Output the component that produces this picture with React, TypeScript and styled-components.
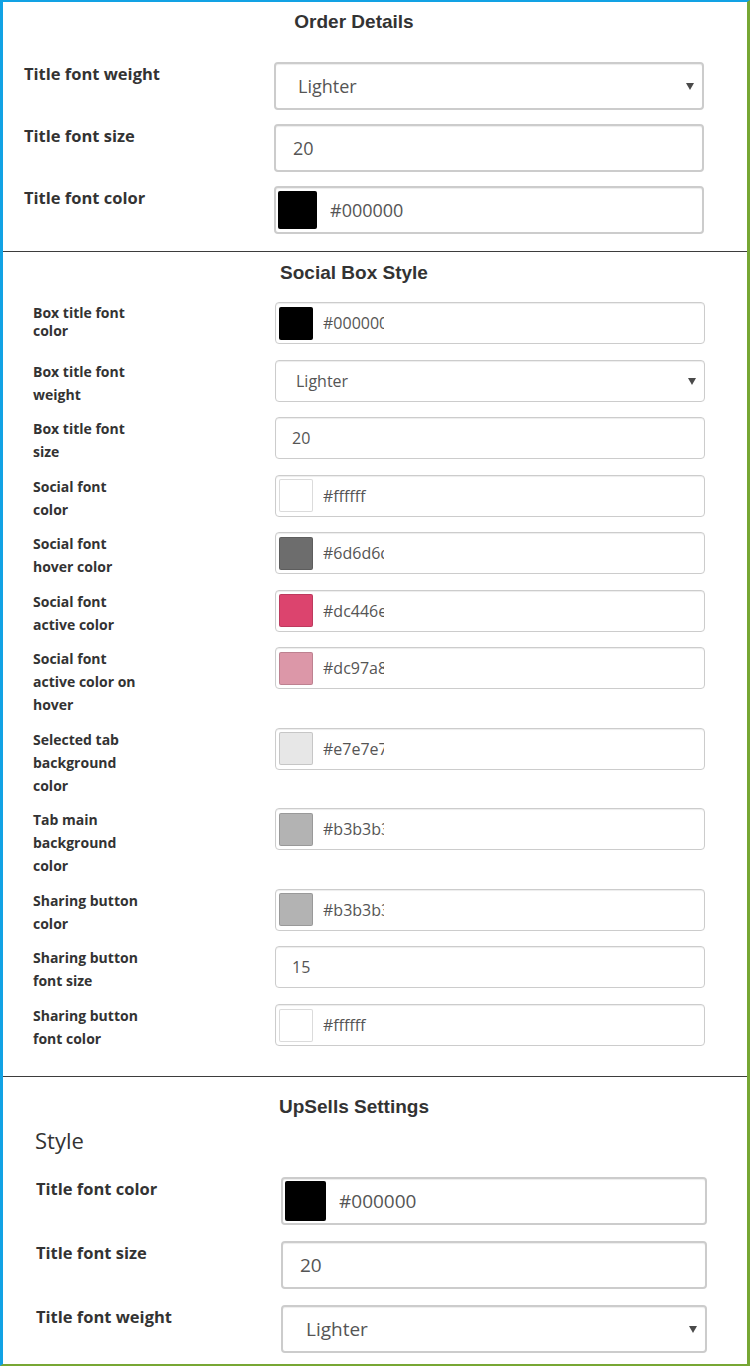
import React from 'react';
import styled, { createGlobalStyle, css } from 'styled-components';

const GlobalStyle = createGlobalStyle`
  html, body {
    margin: 0;
    padding: 0;
    background: #ffffff;
  }
  * {
    box-sizing: border-box;
  }
`;

type Size = 'lg' | 'sm';

const Frame = styled.div`
  width: 750px;
  height: 1366px;
  overflow: hidden;
  background: #ffffff;
  border-top: 2px solid #12a2e4;
  border-left: 3px solid #12a2e4;
  border-right: 3px solid #77a734;
  border-bottom: 2px solid #77a734;
  font-family: 'Open Sans', 'Noto Sans', sans-serif;
  color: #333333;
`;

const Section = styled.section<{ $top: number; $bottom: number; $divider?: boolean }>`
  padding-top: ${(p) => p.$top}px;
  padding-bottom: ${(p) => p.$bottom}px;
  ${(p) =>
    p.$divider &&
    css`
      border-bottom: 1px solid #3d3d3d;
    `}
`;

const Heading = styled.h3<{ $after: number }>`
  margin: 0 0 ${(p) => p.$after}px;
  padding-right: 42px;
  text-align: center;
  font-family: 'Liberation Sans', Arial, sans-serif;
  font-size: 19px;
  line-height: 22px;
  font-weight: 700;
  color: #333333;
`;

const SubHeading = styled.h4`
  margin: 0 0 22px;
  padding-left: 32px;
  font-size: 22px;
  line-height: 30px;
  font-weight: 400;
  color: #333333;
`;

const Rows = styled.div<{ $gap: number }>`
  display: flex;
  flex-direction: column;
  gap: ${(p) => p.$gap}px;
`;

const Row = styled.div<{ $left: number; $labelWidth: number; $fieldWidth: number }>`
  display: grid;
  grid-template-columns: ${(p) => p.$labelWidth}px ${(p) => p.$fieldWidth}px;
  align-items: start;
  padding-left: ${(p) => p.$left}px;
`;

const Label = styled.div<{ $size: Size; $tight?: boolean }>`
  font-weight: 700;
  color: #333333;
  white-space: nowrap;
  ${(p) =>
    p.$size === 'lg'
      ? css`
          font-size: 16.5px;
          line-height: 22px;
          padding-top: 1px;
        `
      : css`
          font-size: 14px;
          line-height: ${p.$tight ? 18 : 23}px;
          padding-top: ${p.$tight ? 2 : 0}px;
          min-height: 46px;
        `}
`;

const fieldBox = css<{ $size: Size }>`
  width: 100%;
  height: ${(p) => (p.$size === 'lg' ? 48 : 42)}px;
  border: ${(p) => (p.$size === 'lg' ? 2 : 1)}px solid #cccccc;
  border-radius: 4px;
  background: #ffffff;
  box-shadow: inset 0 1px 1px rgba(0, 0, 0, 0.075);
  color: #555555;
  font-family: 'Open Sans', 'Noto Sans', sans-serif;
`;

const TextInput = styled.input<{ $size: Size; $pad: number; $font: number }>`
  ${fieldBox};
  display: block;
  padding: 0 0 0 ${(p) => p.$pad}px;
  font-size: ${(p) => p.$font}px;
  outline: none;
`;

const SelectWrap = styled.div`
  position: relative;
  width: 100%;
`;

const Select = styled.select<{ $size: Size; $pad: number; $font: number }>`
  ${fieldBox};
  display: block;
  appearance: none;
  -webkit-appearance: none;
  padding: 0 0 0 ${(p) => p.$pad}px;
  font-size: ${(p) => p.$font}px;
  outline: none;
`;

const Caret = styled.span<{ $size: Size }>`
  position: absolute;
  right: ${(p) => (p.$size === 'lg' ? 10 : 9)}px;
  top: 50%;
  margin-top: -3px;
  width: 0;
  height: 0;
  border-left: 4.5px solid transparent;
  border-right: 4.5px solid transparent;
  border-top: 7px solid #4a4a4a;
  pointer-events: none;
`;

const ColorBox = styled.div<{ $size: Size }>`
  ${fieldBox};
  display: flex;
  align-items: center;
  padding: 0 0 0 ${(p) => (p.$size === 'lg' ? 2 : 3)}px;
  gap: ${(p) => (p.$size === 'lg' ? 13 : 10)}px;
`;

const Swatch = styled.span<{ $dim: number }>`
  flex: none;
  width: ${(p) => p.$dim + 1}px;
  height: ${(p) => p.$dim}px;
  border: 1px solid rgba(0, 0, 0, 0.14);
  border-radius: 2px;
`;

const HexText = styled.span<{ $font: number; $clip?: number }>`
  flex: none;
  font-size: ${(p) => p.$font}px;
  color: #555555;
  white-space: nowrap;
  overflow: hidden;
  ${(p) =>
    p.$clip &&
    css`
      width: ${p.$clip}px;
    `}
`;

type Field =
  | { kind: 'select'; value: string }
  | { kind: 'text'; value: string }
  | { kind: 'color'; value: string };

type Item = { label: string[]; field: Field; tight?: boolean };

type Layout = {
  size: Size;
  left: number;
  labelWidth: number;
  fieldWidth: number;
  gap: number;
  selectPad: number;
  textPad: number;
  font: number;
  swatch: number;
  clip?: number;
};

const orderItems: Item[] = [
  { label: ['Title font weight'], field: { kind: 'select', value: 'Lighter' } },
  { label: ['Title font size'], field: { kind: 'text', value: '20' } },
  { label: ['Title font color'], field: { kind: 'color', value: '#000000' } },
];

const socialItems: Item[] = [
  { label: ['Box title font', 'color'], field: { kind: 'color', value: '#000000' }, tight: true },
  { label: ['Box title font', 'weight'], field: { kind: 'select', value: 'Lighter' } },
  { label: ['Box title font', 'size'], field: { kind: 'text', value: '20' } },
  { label: ['Social font', 'color'], field: { kind: 'color', value: '#ffffff' } },
  { label: ['Social font', 'hover color'], field: { kind: 'color', value: '#6d6d6d' } },
  { label: ['Social font', 'active color'], field: { kind: 'color', value: '#dc446e' } },
  { label: ['Social font', 'active color on', 'hover'], field: { kind: 'color', value: '#dc97a8' } },
  { label: ['Selected tab', 'background', 'color'], field: { kind: 'color', value: '#e7e7e7' } },
  { label: ['Tab main', 'background', 'color'], field: { kind: 'color', value: '#b3b3b3' } },
  { label: ['Sharing button', 'color'], field: { kind: 'color', value: '#b3b3b3' } },
  { label: ['Sharing button', 'font size'], field: { kind: 'text', value: '15' } },
  { label: ['Sharing button', 'font color'], field: { kind: 'color', value: '#ffffff' } },
];

const upsellItems: Item[] = [
  { label: ['Title font color'], field: { kind: 'color', value: '#000000' } },
  { label: ['Title font size'], field: { kind: 'text', value: '20' } },
  { label: ['Title font weight'], field: { kind: 'select', value: 'Lighter' } },
];

const orderLayout: Layout = {
  size: 'lg', left: 21, labelWidth: 250, fieldWidth: 430, gap: 14,
  selectPad: 22, textPad: 17, font: 18, swatch: 38,
};

const socialLayout: Layout = {
  size: 'sm', left: 30, labelWidth: 242, fieldWidth: 430, gap: 11.55,
  selectPad: 20, textPad: 16, font: 16, swatch: 33, clip: 61,
};

const upsellLayout: Layout = {
  size: 'lg', left: 33, labelWidth: 245, fieldWidth: 426, gap: 16,
  selectPad: 23, textPad: 17, font: 19, swatch: 40,
};

const FieldControl: React.FC<{ field: Field; layout: Layout }> = ({ field, layout }) => {
  if (field.kind === 'select') {
    return (
      <SelectWrap>
        <Select $size={layout.size} $pad={layout.selectPad} $font={layout.font} defaultValue={field.value}>
          <option>Lighter</option>
          <option>Normal</option>
          <option>Bold</option>
          <option>Bolder</option>
        </Select>
        <Caret $size={layout.size} />
      </SelectWrap>
    );
  }
  if (field.kind === 'text') {
    return (
      <TextInput
        $size={layout.size}
        $pad={layout.textPad}
        $font={layout.font}
        defaultValue={field.value}
      />
    );
  }
  return (
    <ColorBox $size={layout.size}>
      <Swatch $dim={layout.swatch} style={{ background: field.value }} />
      <HexText $font={layout.font} $clip={layout.clip}>
        {field.value}
      </HexText>
    </ColorBox>
  );
};

const FormRows: React.FC<{ items: Item[]; layout: Layout }> = ({ items, layout }) => (
  <Rows $gap={layout.gap}>
    {items.map((item) => (
      <Row
        key={item.label.join(' ')}
        $left={layout.left}
        $labelWidth={layout.labelWidth}
        $fieldWidth={layout.fieldWidth}
      >
        <Label $size={layout.size} $tight={item.tight}>
          {item.label.map((line, i) => (
            <React.Fragment key={line}>
              {i > 0 && <br />}
              {line}
            </React.Fragment>
          ))}
        </Label>
        <FieldControl field={item.field} layout={layout} />
      </Row>
    ))}
  </Rows>
);

const App: React.FC = () => (
  <>
    <GlobalStyle />
    <Frame>
      <Section $top={9} $bottom={17} $divider>
        <Heading $after={29}>Order Details</Heading>
        <FormRows items={orderItems} layout={orderLayout} />
      </Section>
      <Section $top={10} $bottom={26} $divider>
        <Heading $after={18}>Social Box Style</Heading>
        <FormRows items={socialItems} layout={socialLayout} />
      </Section>
      <Section $top={19} $bottom={0}>
        <Heading $after={7}>UpSells Settings</Heading>
        <SubHeading>Style</SubHeading>
        <FormRows items={upsellItems} layout={upsellLayout} />
      </Section>
    </Frame>
  </>
);

export default App;
